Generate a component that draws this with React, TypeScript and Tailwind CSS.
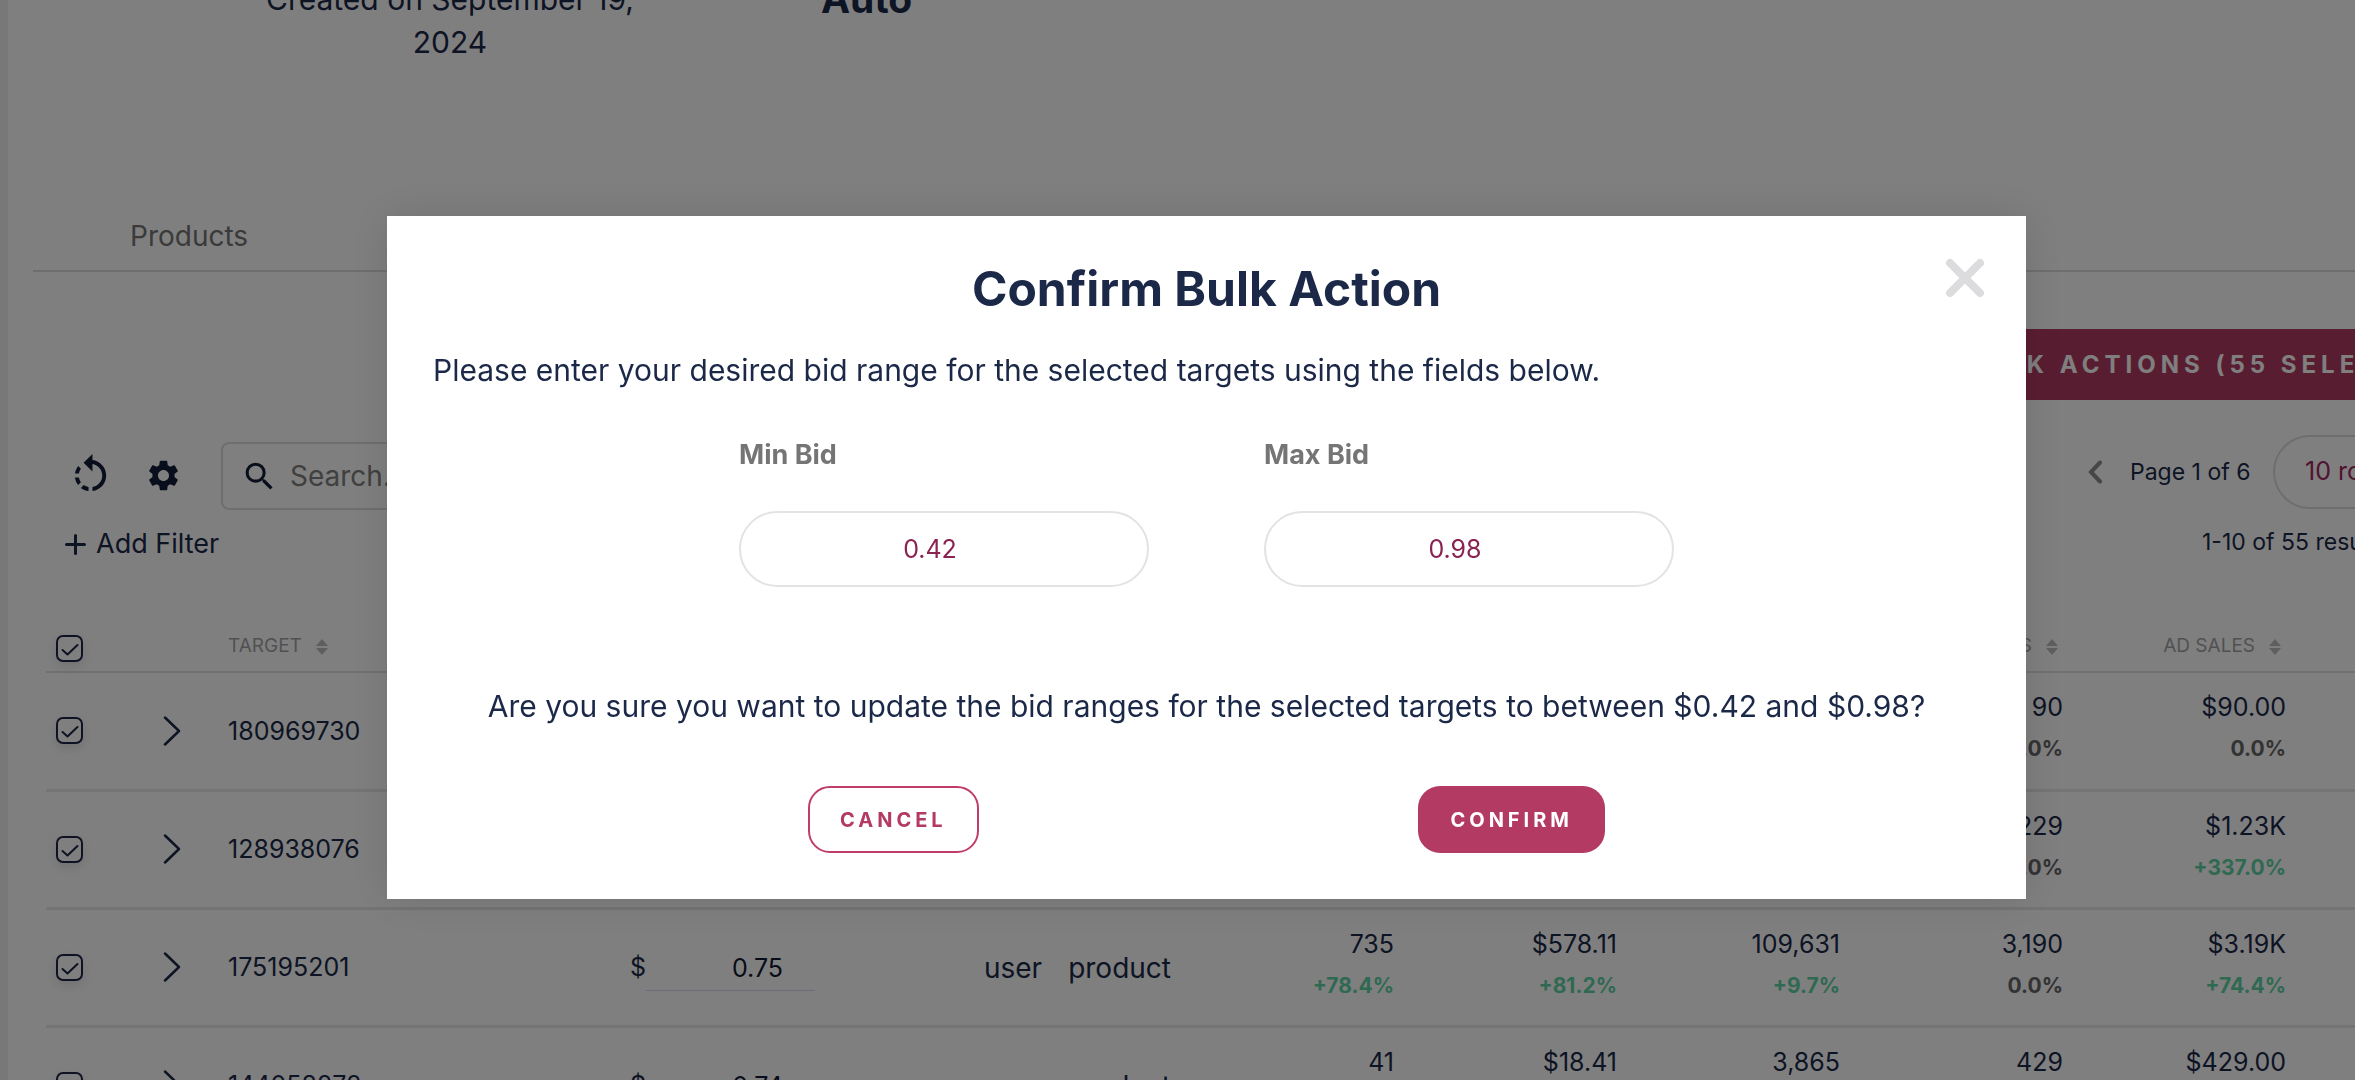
import React from "react";
import { MdRotateLeft, MdSearch, MdSettings } from "react-icons/md";

type Metric = { value: string; change: string };
type Row = { target: string; bid: string; metrics: Metric[] };

const rows: Row[] = [
  {
    target: "180969730",
    bid: "0.82",
    metrics: [
      { value: "12", change: "0.0%" },
      { value: "$9.84", change: "0.0%" },
      { value: "1,204", change: "0.0%" },
      { value: "90", change: "0.0%" },
      { value: "$90.00", change: "0.0%" },
    ],
  },
  {
    target: "128938076",
    bid: "0.79",
    metrics: [
      { value: "310", change: "+12.1%" },
      { value: "$244.90", change: "+14.6%" },
      { value: "48,210", change: "+3.2%" },
      { value: "1,229", change: "0.0%" },
      { value: "$1.23K", change: "+337.0%" },
    ],
  },
  {
    target: "175195201",
    bid: "0.75",
    metrics: [
      { value: "735", change: "+78.4%" },
      { value: "$578.11", change: "+81.2%" },
      { value: "109,631", change: "+9.7%" },
      { value: "3,190", change: "0.0%" },
      { value: "$3.19K", change: "+74.4%" },
    ],
  },
  {
    target: "144058272",
    bid: "0.74",
    metrics: [
      { value: "41", change: "0.0%" },
      { value: "$18.41", change: "0.0%" },
      { value: "3,865", change: "0.0%" },
      { value: "429", change: "0.0%" },
      { value: "$429.00", change: "0.0%" },
    ],
  },
];

const metricNames = ["CLICKS", "SPEND", "VIEWS", "ORDERS", "AD SALES"];

function SortIcon() {
  return (
    <svg viewBox="0 0 12 16" className="h-4 w-3 shrink-0 fill-[#bdbdbd]" aria-hidden="true">
      <path d="M6 0 12 7H0z" />
      <path d="M6 16 0 9h12z" />
    </svg>
  );
}

function Check({ label }: { label: string }) {
  return (
    <span className="relative ml-[10px] block size-[27px]">
      <input
        type="checkbox"
        defaultChecked
        aria-label={label}
        className="block size-[27px] appearance-none rounded-[7px] border-2 border-[#1c2446] shadow-[0_4px_12px_rgba(0,0,0,0.12)]"
      />
      <svg
        viewBox="0 0 27 27"
        className="pointer-events-none absolute inset-0 size-[27px] fill-none stroke-[#1c2446] stroke-2"
        strokeLinecap="round"
        strokeLinejoin="round"
        aria-hidden="true"
      >
        <path d="m6.500 15 5 4.500L21.500 10" />
      </svg>
    </span>
  );
}

function MetricCell({ value, change }: Metric) {
  return (
    <td className="pt-[13px] text-right align-top">
      <div className="text-[25px] leading-[42px]">{value}</div>
      <div
        className={
          change.startsWith("+")
            ? "text-[21px] leading-[42px] font-bold text-[#5fd3a5]"
            : "text-[21px] leading-[42px] font-bold text-[#666666]"
        }
      >
        {change}
      </div>
    </td>
  );
}

function TargetsTable() {
  return (
    <table className="mt-[54px] ml-[38px] w-full table-fixed border-collapse">
      <colgroup>
        <col className="w-[89px]" />
        <col className="w-[93px]" />
        <col className="w-[402px]" />
        <col className="w-[185px]" />
        <col className="w-[356px]" />
        <col className="w-[223px]" />
        <col className="w-[223px]" />
        <col className="w-[223px]" />
        <col className="w-[223px]" />
        <col className="w-[223px]" />
        <col />
      </colgroup>
      <thead>
        <tr className="h-[54px] border-b-2 border-[#e2e2e2] text-[19px] text-[#a3a3a6]">
          <th className="pt-[7px]">
            <Check label="Select all targets" />
          </th>
          <th />
          <th className="pt-1 text-left font-normal">
            <span className="flex items-center gap-[14px]">
              TARGET <SortIcon />
            </span>
          </th>
          <th />
          <th />
          {metricNames.map((name) => (
            <th key={name} className="pt-1 pr-[5px] font-normal">
              <span className="flex items-center justify-end gap-[14px]">
                {name} <SortIcon />
              </span>
            </th>
          ))}
          <th />
        </tr>
      </thead>
      <tbody>
        {rows.map((row) => (
          <tr key={row.target} className="h-[118px] border-b-[3px] border-[#e8e8e8]">
            <td>
              <Check label={`Select target ${row.target}`} />
            </td>
            <td>
              <button type="button" aria-label="Expand row" className="ml-[28px] block">
                <svg
                  viewBox="0 0 18 30"
                  className="h-[30px] w-[18px] fill-none stroke-[#1b2848] stroke-[2.5px]"
                  strokeLinecap="round"
                  strokeLinejoin="round"
                  aria-hidden="true"
                >
                  <path d="m2 1.500 14 13.500L2 28.500" />
                </svg>
              </button>
            </td>
            <td className="pt-[2px] text-[25px]">{row.target}</td>
            <td className="pt-[2px] text-[25px]">
              <label className="flex items-center">
                $
                <input
                  type="text"
                  defaultValue={row.bid}
                  aria-label={`Bid for ${row.target}`}
                  className="h-[45px] min-w-0 flex-1 border-b border-[#d5daf5] pr-8 text-right text-[25px] text-[#0f1830]"
                />
              </label>
            </td>
            <td className="pt-[2px] text-[28px]">
              <span className="flex justify-end gap-[26px]">
                <span>user</span>
                <span>product</span>
              </span>
            </td>
            {row.metrics.map((metric, i) => (
              <MetricCell key={metricNames[i]} {...metric} />
            ))}
            <td />
          </tr>
        ))}
      </tbody>
    </table>
  );
}

function BidField({ id, label, value }: { id: string; label: string; value: string }) {
  return (
    <div className="min-w-0 flex-1">
      <label htmlFor={id} className="block text-[27px] leading-10 font-bold text-[#757575]">
        {label}
      </label>
      <input
        id={id}
        type="text"
        inputMode="decimal"
        defaultValue={value}
        className="mt-9 h-[76px] w-full rounded-full border-2 border-[#e3e3e5] pr-7 text-center text-[25px] text-[#8a2252]"
      />
    </div>
  );
}

function ConfirmDialog() {
  return (
    <div className="fixed inset-0 flex items-start bg-black/50 pt-[216px] pr-[329px] pl-[387px]">
      <section
        role="dialog"
        aria-modal="true"
        aria-labelledby="dialog-title"
        className="relative min-w-0 flex-1 bg-white px-[46px] pt-[41px] pb-[46px] shadow-[0_0_40px_rgba(0,0,0,0.12)]"
      >
        <button type="button" aria-label="Close" className="absolute top-[42px] right-[41px]">
          <svg
            viewBox="0 0 40 40"
            className="size-10 fill-none stroke-[#dcdcdf] stroke-8"
            strokeLinecap="round"
            aria-hidden="true"
          >
            <path d="m5 5 30 30M35 5 5 35" />
          </svg>
        </button>
        <h2 id="dialog-title" className="text-center text-[48px] leading-[64px] font-bold">
          Confirm Bulk Action
        </h2>
        <p className="mt-7 text-[30px] leading-[42px]">
          Please enter your desired bid range for the selected targets using the fields below.
        </p>
        <div className="mt-11 flex gap-[115px] px-[306px]">
          <BidField id="min-bid" label="Min Bid" value="0.42" />
          <BidField id="max-bid" label="Max Bid" value="0.98" />
        </div>
        <p className="mt-[98px] text-center text-[30px] leading-[42px]">
          Are you sure you want to update the bid ranges for the selected targets to between $0.42 and $0.98?
        </p>
        <div className="mt-[59px] flex justify-between px-[375px]">
          <button
            type="button"
            className="h-[67px] rounded-[22px] border-2 border-[#c03d69] px-[30px] text-xl font-bold tracking-[4px] text-[#b33a63]"
          >
            CANCEL
          </button>
          <button
            type="button"
            className="h-[67px] rounded-[22px] bg-[#b33a63] px-8 text-xl font-bold tracking-[4px] text-white"
          >
            CONFIRM
          </button>
        </div>
      </section>
    </div>
  );
}

export default function App() {
  return (
    <div className="h-screen overflow-hidden bg-white font-[Inter,sans-serif] text-[#1b2848]">
      <div className="flex">
        <div className="h-screen w-2 shrink-0 bg-[#f1f1f1]" />
        <main className="-mr-[120px] min-w-0 flex-1">
          <header className="-mt-[22px] flex h-[221px] items-start">
            <p className="ml-[242px] w-[400px] text-center text-[30px] leading-[43px]">
              Created on September 19, 2024
            </p>
            <strong className="ml-[171px] text-[39px] leading-[41px]">Auto</strong>
          </header>
          <nav className="ml-[25px] flex h-[73px] border-b-2 border-[#dddddd] pl-[97px]">
            <a href="#products" className="pt-[17px] text-[28px] leading-10 text-[#757575]">
              Products
            </a>
          </nav>
          <div className="mt-[57px] flex justify-end">
            <button
              type="button"
              className="h-[71px] bg-[#b33a63] px-4 text-2xl font-bold tracking-[5px] whitespace-nowrap text-white"
            >
              BULK ACTIONS (55 SELECTED)
            </button>
          </div>
          <div className="mt-[35px] flex justify-between">
            <div>
              <div className="mt-[7px] flex items-center text-[#131d38]">
                <button type="button" aria-label="Reset" className="mb-[2px] ml-[59px]">
                  <MdRotateLeft size={47} />
                </button>
                <button type="button" aria-label="Settings" className="mb-[2px] ml-[31px]">
                  <MdSettings size={37} />
                </button>
                <label className="ml-[39px] flex h-[68px] w-[420px] items-center gap-3 rounded-[8px] border-2 border-[#dddddd] pl-[18px]">
                  <MdSearch size={37} className="shrink-0" />
                  <input
                    type="search"
                    placeholder="Search..."
                    aria-label="Search"
                    className="min-w-0 flex-1 text-[28px] placeholder:text-[#808080]"
                  />
                </label>
              </div>
              <button type="button" className="mt-[14px] ml-[57px] flex items-center gap-[10px] text-[27px] leading-10">
                <svg
                  viewBox="0 0 21 21"
                  className="size-[21px] stroke-current stroke-3"
                  strokeLinecap="round"
                  aria-hidden="true"
                >
                  <path d="M10.500 1.500v18M1.500 10.500h18" />
                </svg>
                Add Filter
              </button>
            </div>
            <div className="w-[394px] shrink-0">
              <div className="flex items-center whitespace-nowrap">
                <button type="button" aria-label="Previous page" className="ml-[7px]">
                  <svg
                    viewBox="0 0 14 24"
                    className="h-6 w-[14px] fill-none stroke-[#8c8c8f] stroke-4"
                    strokeLinecap="round"
                    aria-hidden="true"
                  >
                    <path d="M12 2.500 3 12l9 9.500" />
                  </svg>
                </button>
                <span className="ml-7 w-[143px] text-[23px]">Page 1 of 6</span>
                <select
                  aria-label="Rows per page"
                  className="h-[74px] w-[190px] appearance-none rounded-full border-2 border-[#dddddd] pl-[30px] text-[25px] text-[#a3265f]"
                >
                  <option>10 rows</option>
                </select>
              </div>
              <p className="mt-[13px] ml-[121px] text-[23px] leading-10 whitespace-nowrap">1-10 of 55 results</p>
            </div>
          </div>
          <TargetsTable />
        </main>
      </div>
      <ConfirmDialog />
    </div>
  );
}
